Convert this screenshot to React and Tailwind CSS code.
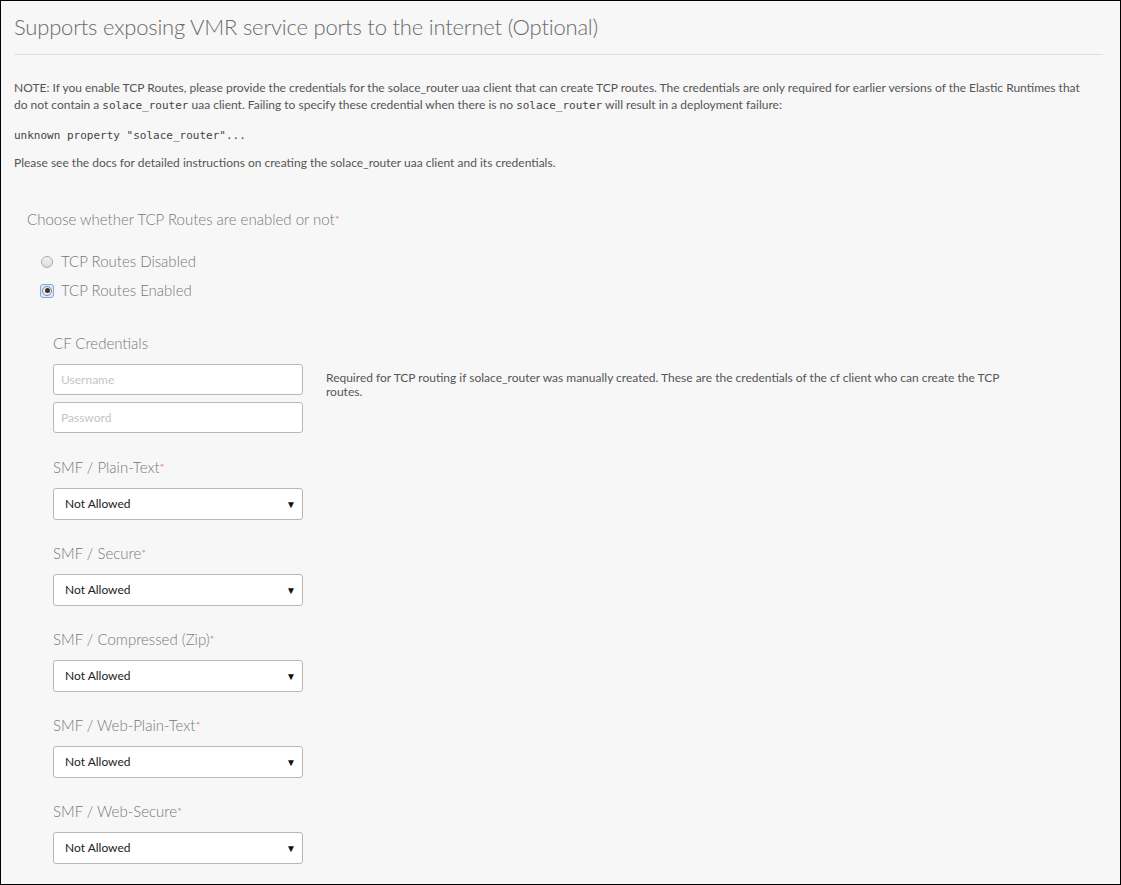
// TCP routes form section
const SANS = { fontFamily: '"Lato", "Liberation Sans", sans-serif' };

function Req() {
    return <span className="text-[#e0675f] text-[12px] align-top">*</span>;
}

function SelectField({ label }) {
    return (
        <div className="flex flex-col">
            <div className="text-[15px] text-[#777] font-light h-[21px] leading-[21px]">
                {label}<Req />
            </div>
            <div className="mt-[10px] w-[250px] h-[32px] bg-white border border-[#b8b8b8] rounded-[3px] flex items-center justify-between pl-[11px] pr-[6px]">
                <span className="text-[12px] text-[#222]">Not Allowed</span>
                <span className="text-[10px] text-[#111]">▼</span>
            </div>
        </div>
    );
}

export default function App() {
    const mono = "font-['DejaVu_Sans_Mono','Liberation_Mono',monospace] text-[11px] text-[#444]";
    return (
        <div style={SANS} className="w-[1121px] h-[885px] bg-[#f7f7f7] border border-black overflow-hidden">
            <div className="px-[13px]">
                <h1 className="text-[22px] font-light text-[#6b6b6b] tracking-[-0.2px] pt-[11px] pb-[12px] leading-[30px]">
                    Supports exposing VMR service ports to the internet (Optional)
                </h1>
                <div className="border-t border-[#e0e0e0] mr-[4px]" />

                <div className="w-[1072px] text-[12px] text-[#555] leading-[17px] mt-[24px]">
                    NOTE: If you enable TCP Routes, please provide the credentials for the solace_router uaa client that can create TCP routes. The credentials are only required for earlier versions of the Elastic Runtimes that do not contain a <code className={`${mono} leading-none`}>solace_router</code> uaa client. Failing to specify these credential when there is no <code className={`${mono} leading-none`}>solace_router</code> will result in a deployment failure:
                </div>
                <div className={`${mono} mt-[14px] leading-[17px]`}>unknown property "solace_router"...</div>
                <div className="text-[12px] text-[#555] leading-[17px] mt-[10px]">
                    Please see the docs for detailed instructions on creating the solace_router uaa client and its credentials.
                </div>

                <div className="pl-[13px] mt-[38px]">
                    <div className="text-[15px] text-[#777] font-light leading-[21px]">
                        Choose whether TCP Routes are enabled or not<Req />
                    </div>
                    <div className="pl-[14px] mt-[21px] flex flex-col gap-[8px]">
                        <label className="flex items-center gap-[8px] h-[21px]">
                            <span className="w-[12px] h-[12px] rounded-full border border-[#aaa] bg-gradient-to-b from-[#f4f4f4] to-[#dcdcdc]" />
                            <span className="text-[15px] text-[#777] font-light">TCP Routes Disabled</span>
                        </label>
                        <label className="flex items-center gap-[8px] h-[21px]">
                            <span className="w-[14px] h-[14px] -ml-[1px] -mr-[1px] rounded-[3px] border border-[#7ea7e0] bg-[#dfe9f8] flex items-center justify-center">
                                <span className="w-[10px] h-[10px] rounded-full border border-[#888] bg-[#eee] flex items-center justify-center">
                                    <span className="w-[5px] h-[5px] rounded-full bg-[#333]" />
                                </span>
                            </span>
                            <span className="text-[15px] text-[#777] font-light">TCP Routes Enabled</span>
                        </label>
                    </div>

                    <div className="pl-[26px] mt-[32px]">
                        <div className="text-[15px] text-[#777] font-light leading-[21px]">CF Credentials</div>
                        <div className="flex mt-[10px]">
                            <div className="flex flex-col gap-[7px]">
                                <input placeholder="Username" className="w-[250px] h-[31px] bg-white border border-[#b8b8b8] rounded-[3px] px-[7px] text-[12px] placeholder:text-[#c4c4c4] outline-none" />
                                <input placeholder="Password" className="w-[250px] h-[31px] bg-white border border-[#b8b8b8] rounded-[3px] px-[7px] text-[12px] placeholder:text-[#c4c4c4] outline-none" />
                            </div>
                            <p className="ml-[23px] w-[700px] text-[12px] text-[#555] leading-[14px] pt-[7px]">
                                Required for TCP routing if solace_router was manually created. These are the credentials of the cf client who can create the TCP routes.
                            </p>
                        </div>

                        <div className="flex flex-col gap-[23px] mt-[24px]">
                            <SelectField label="SMF / Plain-Text" />
                            <SelectField label="SMF / Secure" />
                            <SelectField label="SMF / Compressed (Zip)" />
                            <SelectField label="SMF / Web-Plain-Text" />
                            <SelectField label="SMF / Web-Secure" />
                        </div>
                    </div>
                </div>
            </div>
        </div>
    );
}
